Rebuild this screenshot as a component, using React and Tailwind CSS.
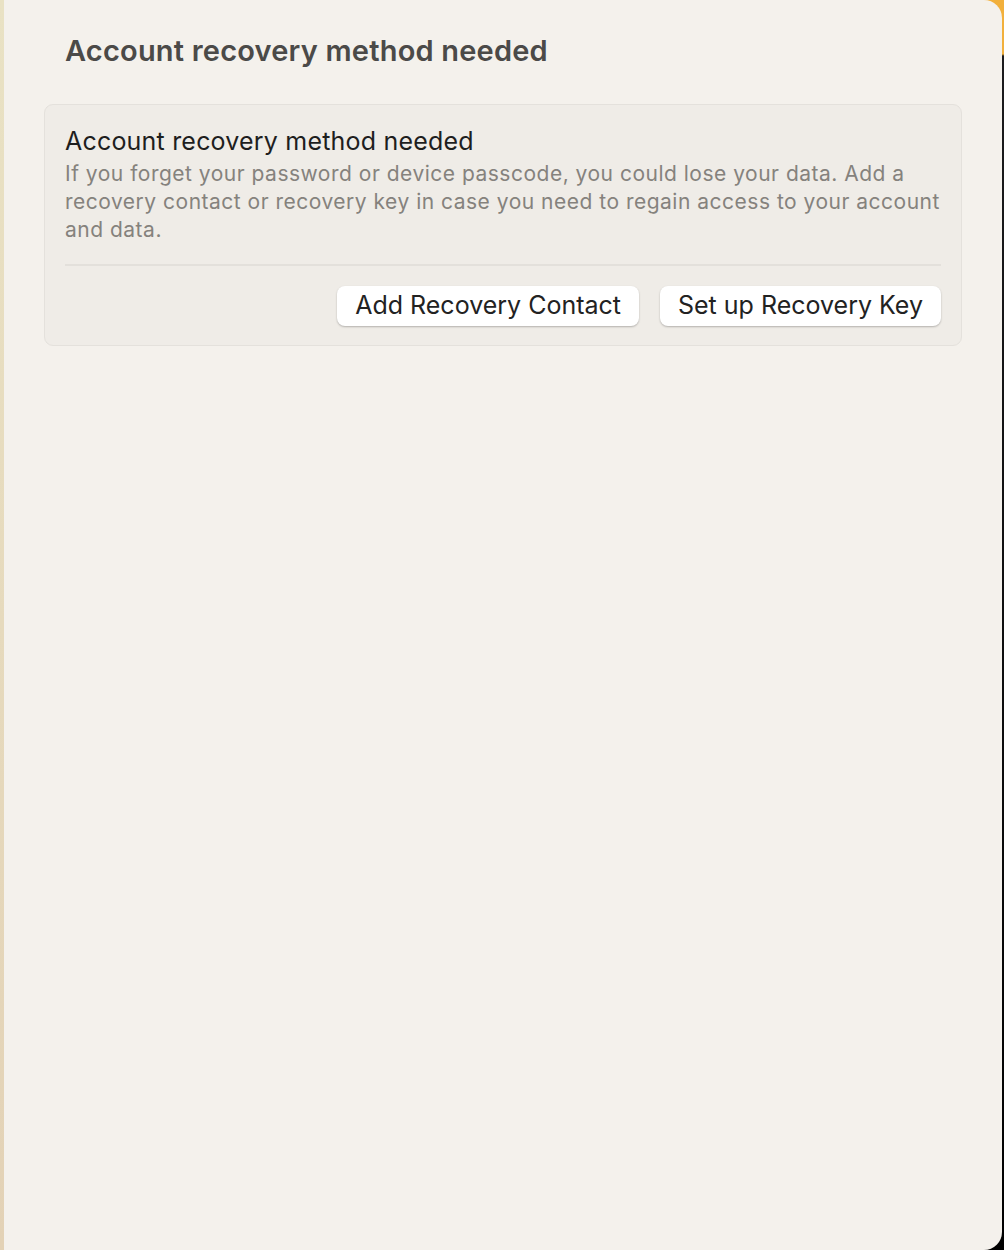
import React from 'react';

const font = { fontFamily: 'Inter, "Noto Sans", sans-serif' };

function App() {
  return (
    <div
      className="w-[1004px] h-[1250px] flex bg-[linear-gradient(to_bottom,#f2b03c_0px,#f2b03c_54px,#1c1c1e_56px,#000_100%)]"
      style={font}
    >
      {/* left edge of the window behind */}
      <div className="w-[4px] h-full bg-[linear-gradient(to_bottom,#e9e2c4,#e3d2b6)]" />

      {/* window */}
      <div className="w-[998px] h-full bg-[#f4f1ec] rounded-r-[18px] flex flex-col">
        <h1 className="pl-[61px] pt-[32px] text-[29px] leading-[38px] font-semibold text-[#4b4a48] tracking-[0.2px]">
          Account recovery method needed
        </h1>

        <div className="mt-[34px] ml-[40px] w-[918px] rounded-[9px] border border-[#e4e1dc] bg-[#efece7] px-[20px] pt-[21px] pb-[19px]">
          <h2 className="text-[25px] leading-[30px] text-[#1e1e1e] tracking-[0.2px]">
            Account recovery method needed
          </h2>
          <p className="mt-[4px] text-[21px] leading-[28px] text-[#85827d] tracking-[0.5px]">
            If you forget your password or device passcode, you could lose your data. Add a recovery contact or recovery key in case you need to regain access to your account and data.
          </p>
          <div className="mt-[20px] h-[2px] bg-[#e3e0db]" />
          <div className="mt-[20px] flex justify-end gap-[21px]">
            <button className="h-[40px] px-[18px] rounded-[8px] bg-white text-[25px] text-[#222] shadow-[0_1px_2px_rgba(0,0,0,0.25)]">
              Add Recovery Contact
            </button>
            <button className="h-[40px] px-[18px] rounded-[8px] bg-white text-[25px] text-[#222] shadow-[0_1px_2px_rgba(0,0,0,0.25)]">
              Set up Recovery Key
            </button>
          </div>
        </div>
      </div>
    </div>
  );
}

export default App;
